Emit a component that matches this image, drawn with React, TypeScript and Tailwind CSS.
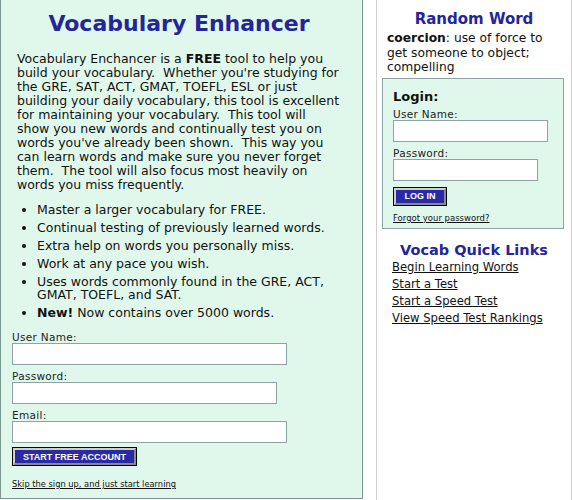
import React from "react";

const bullets = [
  <>Master a larger vocabulary for FREE.</>,
  <>Continual testing of previously learned words.</>,
  <>Extra help on words you personally miss.</>,
  <>Work at any pace you wish.</>,
  <>Uses words commonly found in the GRE, ACT, GMAT, TOEFL, and SAT.</>,
  <>
    <b>New!</b> Now contains over 5000 words.
  </>,
];

const quickLinks = ["Begin Learning Words", "Start a Test", "Start a Speed Test", "View Speed Test Rankings"];

const Field = ({ label, width, first }: { label: string; width: string; first?: boolean }) => (
  <div className={first ? "mt-[3px]" : "mt-[5px]"}>
    <div className="text-[10.5px] leading-[12px] tracking-[0.3px] text-[#222]">{label}</div>
    <input className={`block h-[22px] ${width} bg-white border border-[#8fa3a6] outline-none`} />
  </div>
);

const BlueButton = ({ label, width }: { label: string; width: string }) => (
  <div className={`flex ${width} border border-black`}>
    <button className="flex-1 bg-[#2a2aa6] border-2 border-[#cfcfcf] border-b-[#8a8a8a] border-r-[#8a8a8a] h-[17px] text-[9px] leading-[12px] font-bold text-white font-['Liberation_Sans',Arial,sans-serif]">
      {label}
    </button>
  </div>
);

export default function App() {
  return (
    <div className="flex w-[572px] h-[500px] overflow-hidden bg-white text-[#111] font-['DejaVu_Sans',Verdana,sans-serif]">
      {/* main panel */}
      <div className="w-[363px] h-[499px] shrink-0 bg-[#e0f8ec] border-l border-r border-b border-[#7b9791] pl-[11px] pr-[6px]">
        <h1 className="pt-[11px] pr-[10px] text-center text-[22px] leading-[26px] font-bold text-[#25259a]">Vocabulary Enhancer</h1>
        <p className="mt-[15px] ml-[5px] whitespace-nowrap text-[12.5px] leading-[14px]">
          Vocabulary Enchancer is a <b>FREE</b> tool to help you
          <br />
          build your vocabulary.&nbsp; Whether you're studying for
          <br />
          the GRE, SAT, ACT, GMAT, TOEFL, ESL or just
          <br />
          building your daily vocabulary, this tool is excellent
          <br />
          for maintaining your vocabulary.&nbsp; This tool will
          <br />
          show you new words and continually test you on
          <br />
          words you've already been shown.&nbsp; This way you
          <br />
          can learn words and make sure you never forget
          <br />
          them.&nbsp; The tool will also focus most heavily on
          <br />
          words you miss frequently.
        </p>
        <ul className="mt-[11px] pl-[25px] list-disc text-[12.5px] leading-[13px]">
          {bullets.map((b, i) => (
            <li key={i} className="mb-[5px]">
              {b}
            </li>
          ))}
        </ul>
        <div className="mt-[12px]">
          <Field label="User Name:" width="w-[275px]" first />
          <Field label="Password:" width="w-[265px]" />
          <Field label="Email:" width="w-[275px]" />
          <div className="mt-[4px]">
            <BlueButton label="START FREE ACCOUNT" width="w-[125px]" />
          </div>
          <a href="#" className="block mt-[13px] text-[8.3px] leading-[11px] underline text-[#111]">
            Skip the sign up, and just start learning
          </a>
        </div>
      </div>

      {/* side column */}
      <div className="ml-[13px] w-[196px] shrink-0 border-l border-r border-[#cfcfcf]">
        <h2 className="pt-[9px] text-center text-[15px] leading-[20px] font-bold text-[#25259a]">Random Word</h2>
        <p className="mt-[2px] px-[10px] text-[12.3px] leading-[14.5px]">
          <b>coercion</b>: use of force to get someone to object; compelling
        </p>

        <div className="mt-[3px] ml-[5px] w-[182px] bg-[#e0f8ec] border border-[#8fa3a6] pl-[10px] pt-[10px] pb-[4px]">
          <div className="text-[13px] leading-[16px] font-bold">Login:</div>
          <Field label="User Name:" width="w-[155px]" first />
          <Field label="Password:" width="w-[145px]" />
          <div className="mt-[6px]">
            <BlueButton label="LOG IN" width="w-[54px]" />
          </div>
          <a href="#" className="block mt-[7px] text-[8.5px] leading-[11px] underline text-[#111]">
            Forgot your password?
          </a>
        </div>

        <h2 className="mt-[12px] text-center text-[14.5px] leading-[18px] font-bold text-[#25259a]">Vocab Quick Links</h2>
        <ul className="pl-[15px]">
          {quickLinks.map((l) => (
            <li key={l} className="text-[11.6px] leading-[17px]">
              <a href="#" className="underline text-[#111]">
                {l}
              </a>
            </li>
          ))}
        </ul>
      </div>
    </div>
  );
}
